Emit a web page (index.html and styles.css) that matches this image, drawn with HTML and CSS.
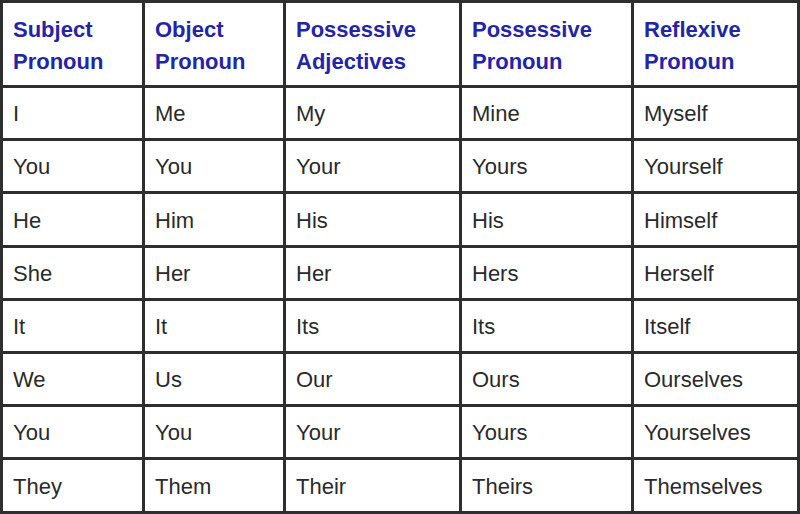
FILE: index.html
```html
<!DOCTYPE html>
<html>
<head>
<meta charset="utf-8">
<link rel="stylesheet" href="styles.css">
</head>
<body>
<table class="pronouns">
  <colgroup>
    <col class="c1"><col class="c2"><col class="c3"><col class="c4"><col class="c5">
  </colgroup>
  <thead>
    <tr class="head">
      <th>Subject<br>Pronoun</th>
      <th>Object<br>Pronoun</th>
      <th>Possessive<br>Adjectives</th>
      <th>Possessive<br>Pronoun</th>
      <th>Reflexive<br>Pronoun</th>
    </tr>
  </thead>
  <tbody>
    <tr class="r"><td>I</td><td>Me</td><td>My</td><td>Mine</td><td>Myself</td></tr>
    <tr class="r"><td>You</td><td>You</td><td>Your</td><td>Yours</td><td>Yourself</td></tr>
    <tr class="r tall"><td>He</td><td>Him</td><td>His</td><td>His</td><td>Himself</td></tr>
    <tr class="r"><td>She</td><td>Her</td><td>Her</td><td>Hers</td><td>Herself</td></tr>
    <tr class="r"><td>It</td><td>It</td><td>Its</td><td>Its</td><td>Itself</td></tr>
    <tr class="r"><td>We</td><td>Us</td><td>Our</td><td>Ours</td><td>Ourselves</td></tr>
    <tr class="r"><td>You</td><td>You</td><td>Your</td><td>Yours</td><td>Yourselves</td></tr>
    <tr class="r tall"><td>They</td><td>Them</td><td>Their</td><td>Theirs</td><td>Themselves</td></tr>
  </tbody>
</table>
</body>
</html>
```

FILE: styles.css
```css
html, body {
  margin: 0;
  padding: 0;
  background: #ffffff;
}

.pronouns {
  width: 800px;
  height: 514px;
  table-layout: fixed;
  border-collapse: separate;
  border-spacing: 0;
  border-top: 3px solid #2e2e2e;
  border-left: 3px solid #2e2e2e;
  box-sizing: border-box;
  font-family: "Liberation Sans", Arial, sans-serif;
  font-size: 22px;
  color: #2a2a2a;
}

.c1 { width: 142px; }
.c2 { width: 141px; }
.c3 { width: 176px; }
.c4 { width: 172px; }
.c5 { width: 166px; }

.pronouns th,
.pronouns td {
  box-sizing: border-box;
  border-right: 3px solid #2e2e2e;
  border-bottom: 3px solid #2e2e2e;
  padding: 2px 0 0 10px;
  text-align: left;
  vertical-align: middle;
  overflow: hidden;
  white-space: nowrap;
}

.pronouns th {
  color: #2424a6;
  font-weight: bold;
  line-height: 32px;
  padding-top: 4px;
}

.head { height: 85px; }
.r { height: 53px; }
.r.tall { height: 54px; }
```
